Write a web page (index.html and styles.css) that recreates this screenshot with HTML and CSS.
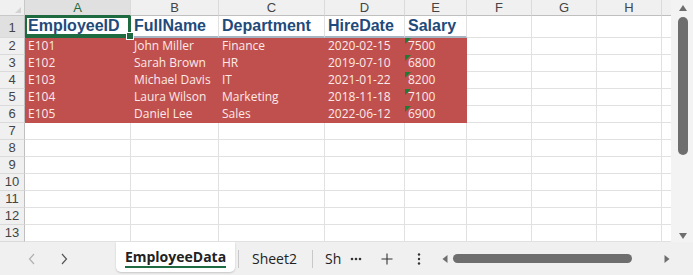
FILE: index.html
```html
<!DOCTYPE html>
<html>
<head>
<meta charset="utf-8">
<link rel="stylesheet" href="styles.css">
</head>
<body>
<div class="app">
  <div class="main">
    <div class="sheet">
      <div class="corner"></div>
      <div class="ch sel">A</div><div class="ch">B</div><div class="ch">C</div><div class="ch">D</div><div class="ch">E</div><div class="ch">F</div><div class="ch">G</div><div class="ch">H</div><div class="ch edge"></div>

      <div class="rh selr">1</div>
      <div class="c hd active">EmployeeID</div><div class="c hd">FullName</div><div class="c hd">Department</div><div class="c hd">HireDate</div><div class="c hd">Salary</div><div class="c"></div><div class="c"></div><div class="c"></div><div class="c edge"></div>

      <div class="rh">2</div>
      <div class="c f">E101</div><div class="c f">John Miller</div><div class="c f">Finance</div><div class="c f">2020-02-15</div><div class="c f t">7500</div><div class="c"></div><div class="c"></div><div class="c"></div><div class="c edge"></div>

      <div class="rh">3</div>
      <div class="c f">E102</div><div class="c f">Sarah Brown</div><div class="c f">HR</div><div class="c f">2019-07-10</div><div class="c f t">6800</div><div class="c"></div><div class="c"></div><div class="c"></div><div class="c edge"></div>

      <div class="rh">4</div>
      <div class="c f">E103</div><div class="c f">Michael Davis</div><div class="c f">IT</div><div class="c f">2021-01-22</div><div class="c f t">8200</div><div class="c"></div><div class="c"></div><div class="c"></div><div class="c edge"></div>

      <div class="rh">5</div>
      <div class="c f">E104</div><div class="c f">Laura Wilson</div><div class="c f">Marketing</div><div class="c f">2018-11-18</div><div class="c f t">7100</div><div class="c"></div><div class="c"></div><div class="c"></div><div class="c edge"></div>

      <div class="rh">6</div>
      <div class="c f">E105</div><div class="c f">Daniel Lee</div><div class="c f">Sales</div><div class="c f">2022-06-12</div><div class="c f t">6900</div><div class="c"></div><div class="c"></div><div class="c"></div><div class="c edge"></div>

      <div class="rh">7</div><div class="c"></div><div class="c"></div><div class="c"></div><div class="c"></div><div class="c"></div><div class="c"></div><div class="c"></div><div class="c"></div><div class="c edge"></div>
      <div class="rh">8</div><div class="c"></div><div class="c"></div><div class="c"></div><div class="c"></div><div class="c"></div><div class="c"></div><div class="c"></div><div class="c"></div><div class="c edge"></div>
      <div class="rh">9</div><div class="c"></div><div class="c"></div><div class="c"></div><div class="c"></div><div class="c"></div><div class="c"></div><div class="c"></div><div class="c"></div><div class="c edge"></div>
      <div class="rh">10</div><div class="c"></div><div class="c"></div><div class="c"></div><div class="c"></div><div class="c"></div><div class="c"></div><div class="c"></div><div class="c"></div><div class="c edge"></div>
      <div class="rh">11</div><div class="c"></div><div class="c"></div><div class="c"></div><div class="c"></div><div class="c"></div><div class="c"></div><div class="c"></div><div class="c"></div><div class="c edge"></div>
      <div class="rh">12</div><div class="c"></div><div class="c"></div><div class="c"></div><div class="c"></div><div class="c"></div><div class="c"></div><div class="c"></div><div class="c"></div><div class="c edge"></div>
      <div class="rh">13</div><div class="c"></div><div class="c"></div><div class="c"></div><div class="c"></div><div class="c"></div><div class="c"></div><div class="c"></div><div class="c"></div><div class="c edge"></div>
    </div>
    <div class="vscroll">
      <svg class="arr" width="10" height="8" viewBox="0 0 10 8"><path d="M5 1 L9 7 L1 7 Z" fill="#6e6e6e"/></svg>
      <div class="vthumb"></div>
      <div class="vspace"></div>
      <svg class="arr" width="10" height="8" viewBox="0 0 10 8"><path d="M1 1 L9 1 L5 7 Z" fill="#6e6e6e"/></svg>
    </div>
  </div>
  <div class="tabbar">
    <div class="nav"><svg width="8" height="12" viewBox="0 0 8 12"><path d="M6 1 L1.5 6 L6 11" fill="none" stroke="#b0b0b0" stroke-width="1.2"/></svg></div>
    <div class="nav"><svg width="8" height="12" viewBox="0 0 8 12"><path d="M2 1 L6.5 6 L2 11" fill="none" stroke="#555" stroke-width="1.2"/></svg></div>
    <div class="tab active-tab"><span class="tab-label">EmployeeData</span></div>
    <div class="sep"></div>
    <div class="tab plain">Sheet2</div>
    <div class="sep"></div>
    <div class="tab clip">Sh</div>
    <div class="tool first"><svg width="12" height="4" viewBox="0 0 12 4"><circle cx="2" cy="2" r="1.3" fill="#333"/><circle cx="6" cy="2" r="1.3" fill="#333"/><circle cx="10" cy="2" r="1.3" fill="#333"/></svg></div>
    <div class="tool"><svg width="12" height="12" viewBox="0 0 12 12"><path d="M6 0.5 V11.5 M0.5 6 H11.5" stroke="#333" stroke-width="1.1"/></svg></div>
    <div class="tool"><svg width="4" height="14" viewBox="0 0 4 14"><circle cx="2" cy="2.5" r="1.2" fill="#333"/><circle cx="2" cy="7" r="1.2" fill="#333"/><circle cx="2" cy="11.5" r="1.2" fill="#333"/></svg></div>
    <div class="hscroll">
      <svg width="6" height="10" viewBox="0 0 6 10"><path d="M5.5 1 L0.5 5 L5.5 9 Z" fill="#6e6e6e"/></svg>
      <div class="hthumb"></div>
      <svg width="6" height="10" viewBox="0 0 6 10"><path d="M0.5 1 L5.5 5 L0.5 9 Z" fill="#6e6e6e"/></svg>
    </div>
  </div>
</div>
</body>
</html>
```

FILE: styles.css
```css
* { box-sizing: border-box; }
html, body { margin: 0; padding: 0; }
body {
  width: 693px;
  height: 275px;
  overflow: hidden;
  background: #f3f3f3;
  font-family: "Open Sans", "Noto Sans", sans-serif;
}
.app { display: flex; flex-direction: column; width: 693px; height: 275px; }
.main { display: flex; height: 242px; }
.sheet {
  display: grid;
  width: 671px;
  height: 242px;
  grid-template-columns: 25px 106px 88px 106px 80px 62px 65px 65px 65px 9px;
  grid-template-rows: 16px 22px repeat(12, 17px);
  background: #ffffff;
}
.corner {
  background: #f0f0f0;
  border-right: 1px solid #c8c8c8;
  border-bottom: 1px solid #c8c8c8;
  position: relative;
}
.corner::after {
  content: "";
  position: absolute;
  right: 3px;
  bottom: 2px;
  width: 0; height: 0;
  border-left: 6px solid transparent;
  border-bottom: 6px solid #d3d3d3;
}
.ch {
  background: #f0f0f0;
  border-right: 1px solid #dadada;
  border-bottom: 1px solid #bfbfbf;
  font-family: "Liberation Sans", Arial, sans-serif;
  font-size: 13px;
  color: #444;
  display: flex;
  align-items: center;
  justify-content: center;
  line-height: 15px;
}
.ch.sel { background: #e0e0e0; color: #1e6b41; border-bottom: 1px solid #1e6b41; }
.ch.edge { border-right: none; }
.rh {
  background: #f0f0f0;
  border-right: 1px solid #bfbfbf;
  border-bottom: 1px solid #dadada;
  font-family: "Liberation Sans", Arial, sans-serif;
  font-size: 13px;
  color: #444;
  display: flex;
  align-items: flex-end;
  justify-content: center;
  line-height: 16px;
}
.rh.selr { background: #e0e0e0; align-items: center; padding-top: 3px; }
.c {
  border-right: 1px solid #e1e1e1;
  border-bottom: 1px solid #e1e1e1;
  font-size: 12px;
  line-height: 16px;
  padding-left: 3px;
  white-space: nowrap;
  overflow: visible;
  display: flex;
  align-items: flex-end;
  position: relative;
}
.c.edge { border-right: none; }
.hd {
  font-family: "Liberation Sans", Arial, sans-serif;
  font-weight: bold;
  font-size: 16px;
  color: #1f4a7a;
  border-bottom: 2px solid #a7b3c1;
  line-height: 18px;
  padding-bottom: 1px;
}
.active { box-shadow: inset 0 0 0 2px #1e6b41; border-bottom-color: #1e6b41; border-right-color: #1e6b41; }
.active::after {
  content: "";
  position: absolute;
  right: -4px;
  bottom: -4px;
  width: 6px;
  height: 6px;
  background: #1e6b41;
  border: 1px solid #fff;
  z-index: 2;
}
.f {
  background: #c0504d;
  border-right-color: #c0504d;
  border-bottom-color: #c0504d;
  color: #fbe9e8;
}
.t::before {
  content: "";
  position: absolute;
  left: 0;
  top: 0;
  width: 0; height: 0;
  border-top: 6px solid #1e7a34;
  border-right: 6px solid transparent;
}
.vscroll {
  width: 22px;
  height: 242px;
  display: flex;
  flex-direction: column;
  align-items: center;
  padding: 4px 0 2px 2px;
}
.arr { flex: none; }
.vthumb {
  width: 10px;
  height: 138px;
  margin-top: 5px;
  border-radius: 5px;
  background: #6e6e6e;
  flex: none;
}
.vspace { flex: 1; }
.tabbar {
  height: 33px;
  display: flex;
  align-items: stretch;
  background: #f0f0f0;
  font-family: "Open Sans", "Noto Sans", sans-serif;
}
.nav {
  width: 32px;
  display: flex;
  align-items: center;
  justify-content: center;
}
.nav:first-child { margin-left: 16px; }
.tab {
  display: flex;
  align-items: center;
  font-size: 14px;
  color: #222;
}
.active-tab {
  margin-left: 36px;
  width: 119px;
  height: 30px;
  background: #ffffff;
  border-radius: 0 0 5px 5px;
  box-shadow: 0 1px 2px rgba(0,0,0,0.18);
  justify-content: center;
}
.tab-label {
  font-weight: bold;
  font-size: 14px;
  color: #222;
  border-bottom: 2.5px solid #1e6b41;
  line-height: 18px;
  padding-top: 2px;
}
.sep {
  width: 1px;
  height: 18px;
  background: #c8c8c8;
  align-self: center;
  margin-left: 3px;
}
.plain { padding-left: 13px; width: 70px; }
.clip {
  margin-left: 12px;
  white-space: nowrap;
}
.tool {
  width: 32px;
  display: flex;
  align-items: center;
  justify-content: center;
}
.tool.first { width: 30px; }
.hscroll {
  display: flex;
  align-items: center;
  margin-left: 7px;
}
.hthumb {
  width: 179px;
  height: 9px;
  border-radius: 5px;
  background: #6e6e6e;
  margin-left: 5px;
  margin-right: 32px;
}
```
